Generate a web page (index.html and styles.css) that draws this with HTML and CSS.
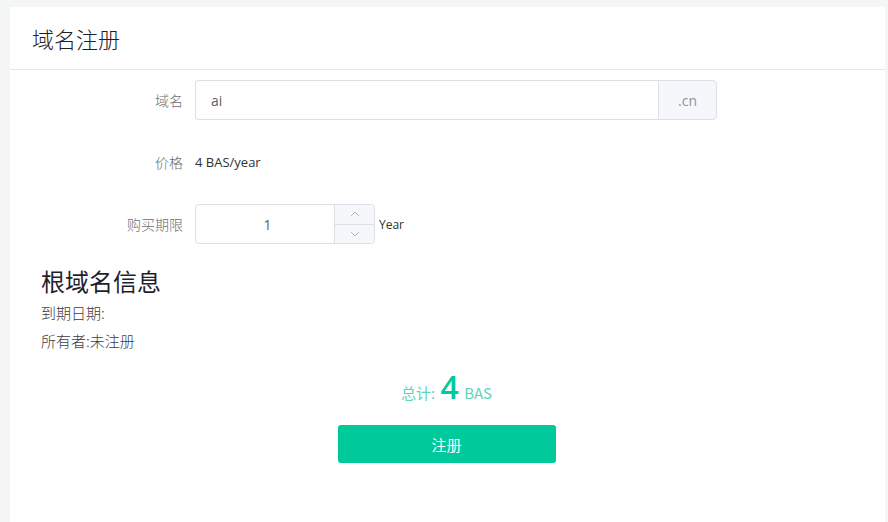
FILE: index.html
```html
<!DOCTYPE html>
<html lang="zh">
<head>
<meta charset="utf-8">
<link rel="stylesheet" href="styles.css">
</head>
<body>
<div class="page">
  <div class="card">
    <div class="card-header">域名注册</div>
    <div class="card-body">
      <div class="form">
        <div class="form-item">
          <label class="form-label">域名</label>
          <div class="form-content">
            <div class="input-group">
              <input class="input" type="text" value="ai">
              <div class="append">.cn</div>
            </div>
          </div>
        </div>
        <div class="form-item">
          <label class="form-label">价格</label>
          <div class="form-content price">4 BAS/year</div>
        </div>
        <div class="form-item">
          <label class="form-label">购买期限</label>
          <div class="form-content">
            <div class="input-number">
              <input class="number-input" type="text" value="1">
              <div class="spin">
                <span class="spin-btn up">
                  <svg width="10" height="6" viewBox="0 0 10 6"><path d="M1 5 L5 1 L9 5" fill="none" stroke="#b4b8c0" stroke-width="1"/></svg>
                </span>
                <span class="spin-btn down">
                  <svg width="10" height="6" viewBox="0 0 10 6"><path d="M1 1 L5 5 L9 1" fill="none" stroke="#b4b8c0" stroke-width="1"/></svg>
                </span>
              </div>
            </div>
            <span class="unit">Year</span>
          </div>
        </div>
      </div>
      <div class="info">
        <h3 class="info-title">根域名信息</h3>
        <p class="info-line">到期日期:</p>
        <p class="info-line">所有者:未注册</p>
      </div>
      <div class="total">总计: <span class="total-num">4</span> BAS</div>
      <div class="actions">
        <button class="btn-primary">注册</button>
      </div>
    </div>
  </div>
</div>
</body>
</html>
```

FILE: styles.css
```css
* { box-sizing: border-box; }
html, body {
  margin: 0;
  padding: 0;
  background: #f4f6f6;
  font-family: "Open Sans", "Noto Sans CJK SC", sans-serif;
  color: #303133;
}
.page {
  padding: 7px 3px 0 10px;
  height: 522px;
  overflow: hidden;
}
.card {
  background: #fff;
  height: 600px;
}
.card-header {
  height: 63px;
  border-bottom: 1px solid #e4e6ea;
  padding: 0 22px;
  display: flex;
  align-items: center;
  font-size: 22px;
  font-family: "Noto Sans CJK SC", sans-serif;
  color: #1f2024;
  font-weight: 300;
}
.card-body {
  padding: 10px 0 0 31px;
}
.form-item {
  display: flex;
  align-items: center;
  height: 40px;
  margin-bottom: 22px;
}
.form-label {
  width: 154px;
  padding-right: 12px;
  text-align: right;
  font-size: 14px;
  color: #6b6d72;
  font-family: "Noto Sans CJK SC", sans-serif;
  font-weight: 300;
}
.form-content {
  display: flex;
  align-items: center;
  font-size: 13px;
}
.price { color: #303133; }
.input-group {
  display: flex;
  width: 522px;
  height: 40px;
}
.input {
  flex: 1;
  height: 40px;
  border: 1px solid #dcdfe6;
  border-right: none;
  border-radius: 4px 0 0 4px;
  padding: 0 15px;
  font-size: 14px;
  font-family: "Open Sans", sans-serif;
  color: #606266;
  outline: none;
}
.append {
  width: 59px;
  height: 40px;
  border: 1px solid #dcdfe6;
  border-radius: 0 4px 4px 0;
  background: #f5f7fa;
  color: #909399;
  font-size: 14px;
  display: flex;
  align-items: center;
  justify-content: center;
}
.input-number {
  position: relative;
  width: 180px;
  height: 40px;
}
.number-input {
  width: 100%;
  height: 40px;
  border: 1px solid #dcdfe6;
  border-radius: 4px;
  padding: 0 50px 0 15px;
  text-align: center;
  font-size: 14px;
  font-family: "Open Sans", sans-serif;
  color: #606266;
  outline: none;
}
.spin {
  position: absolute;
  right: 1px;
  top: 1px;
  bottom: 1px;
  width: 40px;
  display: flex;
  flex-direction: column;
  border-left: 1px solid #dcdfe6;
  background: #f5f7fa;
  border-radius: 0 4px 4px 0;
}
.spin-btn {
  flex: 1;
  display: flex;
  align-items: center;
  justify-content: center;
}
.spin-btn.up { border-bottom: 1px solid #dcdfe6; }
.unit {
  margin-left: 4px;
  font-size: 12px;
  color: #303133;
}
.info-title {
  margin: 0 0 3px;
  font-size: 24px;
  font-weight: 400;
  font-family: "Noto Sans CJK SC", sans-serif;
  color: #1f1f2e;
  line-height: 30px;
}
.info-line {
  margin: 0;
  font-size: 15px;
  line-height: 28px;
  color: #3c3c44;
  font-family: "Noto Sans CJK SC", sans-serif;
  font-weight: 300;
}
.total {
  margin-top: 10px;
  text-align: center;
  color: #5fd4b4;
  font-size: 15px;
  padding-right: 33px;
  font-family: "Noto Sans CJK SC", "Open Sans", sans-serif;
}
.total-num {
  font-size: 32px;
  font-weight: 600;
  color: #00c99b;
  font-family: "Open Sans", sans-serif;
  margin: 0 2px;
}
.actions {
  display: flex;
  justify-content: center;
  padding-right: 33px;
  margin-top: 17px;
}
.btn-primary {
  width: 218px;
  height: 38px;
  border: none;
  border-radius: 3px;
  background: #00c99b;
  color: #fff;
  font-size: 15px;
  font-family: "Noto Sans CJK SC", sans-serif;
}
```
